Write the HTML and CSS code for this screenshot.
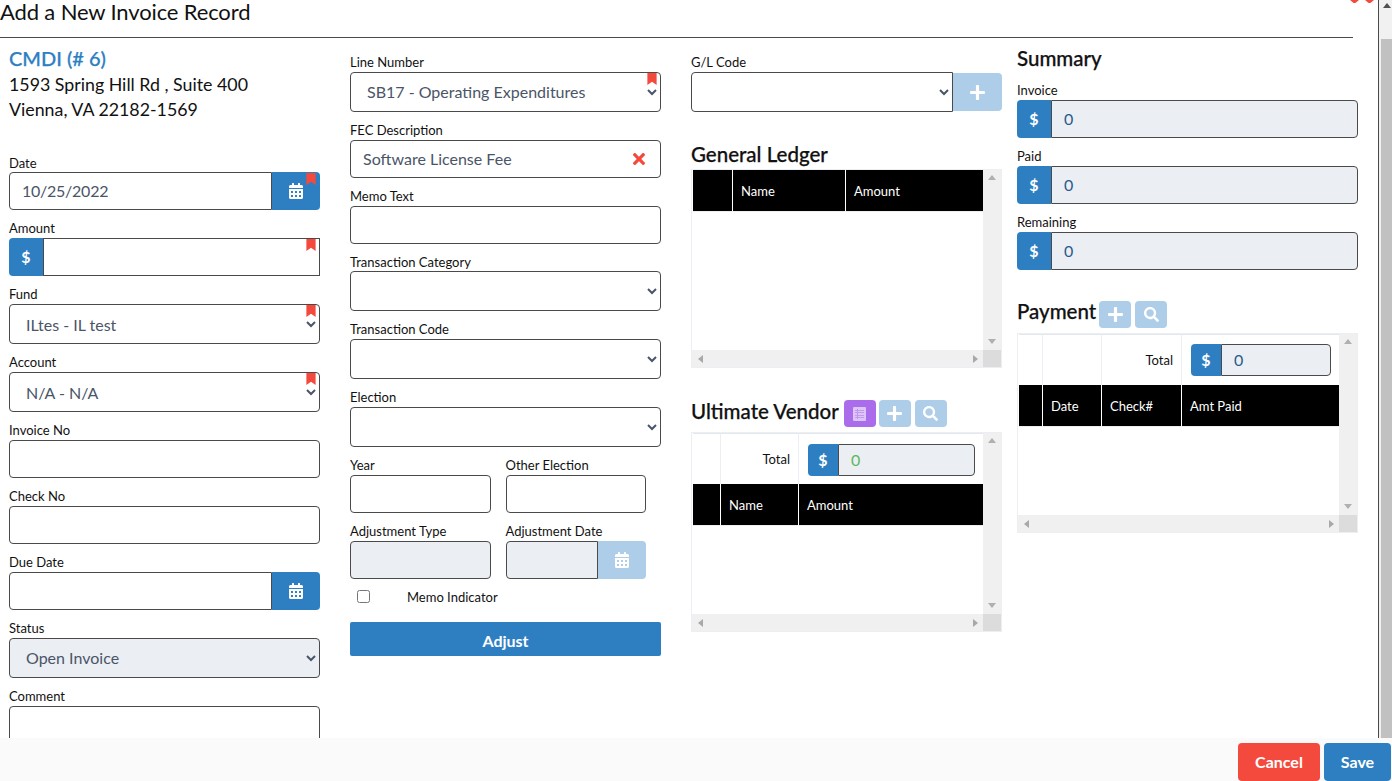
FILE: index.html
```html
<!DOCTYPE html>
<html lang="en">
<head>
<meta charset="utf-8">
<title>Add a New Invoice Record</title>
<link rel="stylesheet" href="styles.css">
</head>
<body>
<svg class="defs" width="0" height="0" aria-hidden="true">
  <symbol id="i-cal" viewBox="0 0 448 512"><path d="M0 464c0 26.5 21.5 48 48 48h352c26.5 0 48-21.5 48-48V192H0v272zm320-196c0-6.6 5.4-12 12-12h40c6.6 0 12 5.4 12 12v40c0 6.6-5.4 12-12 12h-40c-6.6 0-12-5.4-12-12v-40zm0 128c0-6.6 5.4-12 12-12h40c6.6 0 12 5.4 12 12v40c0 6.6-5.4 12-12 12h-40c-6.6 0-12-5.4-12-12v-40zM192 268c0-6.6 5.4-12 12-12h40c6.6 0 12 5.4 12 12v40c0 6.6-5.4 12-12 12h-40c-6.6 0-12-5.4-12-12v-40zm0 128c0-6.6 5.4-12 12-12h40c6.6 0 12 5.4 12 12v40c0 6.6-5.4 12-12 12h-40c-6.6 0-12-5.4-12-12v-40zM64 268c0-6.6 5.4-12 12-12h40c6.6 0 12 5.4 12 12v40c0 6.6-5.4 12-12 12H76c-6.6 0-12-5.4-12-12v-40zm0 128c0-6.6 5.4-12 12-12h40c6.6 0 12 5.4 12 12v40c0 6.6-5.4 12-12 12H76c-6.6 0-12-5.4-12-12v-40zM400 64h-48V16c0-8.8-7.2-16-16-16h-32c-8.8 0-16 7.2-16 16v48H160V16c0-8.8-7.2-16-16-16h-32c-8.8 0-16 7.2-16 16v48H48C21.5 64 0 85.5 0 112v48h448v-48c0-26.5-21.5-48-48-48z"/></symbol>
  <symbol id="i-plus" viewBox="0 0 448 512"><path d="M416 208H272V64c0-17.67-14.33-32-32-32h-32c-17.67 0-32 14.33-32 32v144H32c-17.67 0-32 14.33-32 32v32c0 17.67 14.33 32 32 32h144v144c0 17.67 14.33 32 32 32h32c17.67 0 32-14.33 32-32V304h144c17.67 0 32-14.33 32-32v-32c0-17.67-14.33-32-32-32z"/></symbol>
  <symbol id="i-search" viewBox="0 0 512 512"><path d="M505 442.7L405.3 343c-4.5-4.5-10.6-7-17-7H372c27.6-35.3 44-79.7 44-128C416 93.1 322.9 0 208 0S0 93.1 0 208s93.1 208 208 208c48.3 0 92.7-16.4 128-44v16.3c0 6.4 2.5 12.5 7 17l99.7 99.7c9.4 9.4 24.6 9.4 33.9 0l28.3-28.3c9.4-9.4 9.4-24.6.1-34zM208 336c-70.7 0-128-57.2-128-128 0-70.7 57.2-128 128-128 70.7 0 128 57.2 128 128 0 70.7-57.2 128-128 128z"/></symbol>
  <symbol id="i-times" viewBox="0 0 352 512"><path d="M242.72 256l100.07-100.07c12.28-12.28 12.28-32.19 0-44.48l-22.24-22.24c-12.28-12.28-32.19-12.28-44.48 0L176 189.28 75.93 89.21c-12.28-12.28-32.19-12.28-44.48 0L9.21 111.45c-12.28 12.28-12.28 32.19 0 44.48L109.28 256 9.21 356.07c-12.28 12.28-12.28 32.19 0 44.48l22.24 22.24c12.28 12.28 32.2 12.28 44.48 0L176 322.72l100.07 100.07c12.28 12.28 32.2 12.28 44.48 0l22.24-22.24c12.28-12.28 12.28-32.19 0-44.48L242.72 256z"/></symbol>
  <symbol id="i-list" viewBox="0 0 13 14"><path fill-rule="evenodd" d="M1 0h11a1 1 0 0 1 1 1v12a1 1 0 0 1-1 1H1a1 1 0 0 1-1-1V1a1 1 0 0 1 1-1zm1 3v.6h9V3zm0 2.5v.6h9v-.6zM2 8v.6h9V8zm0 2.5v.6h9v-.6zM4 2v10h.6V2z"/></symbol>
  <symbol id="i-mark" viewBox="0 0 10 13"><path d="M0 0h10v13L5 9.5 0 13z"/></symbol>
</svg>

<div class="window">
  <div class="page">
    <main class="content">
      <h1 class="title">Add a New Invoice Record</h1>
      <div class="columns">

        <section class="col col-a">
          <div class="org">CMDI (# 6)</div>
          <div class="addr">1593 Spring Hill Rd , Suite 400</div>
          <div class="addr">Vienna, VA 22182-1569</div>
          <div class="spacer"></div>

          <div class="field">
            <label class="low">Date</label>
            <div class="group marked">
              <input class="ctl joined-r date" type="text" value="10/25/2022">
              <span class="addon wide"><svg class="ico"><use href="#i-cal"/></svg></span>
              <svg class="mark"><use href="#i-mark"/></svg>
            </div>
          </div>
          <div class="field">
            <label>Amount</label>
            <div class="group marked">
              <span class="addon dollar">$</span>
              <input class="ctl joined-l square" type="text">
              <svg class="mark"><use href="#i-mark"/></svg>
            </div>
          </div>
          <div class="field">
            <label>Fund</label>
            <div class="group marked">
              <select class="ctl sel sel-low"><option>ILtes - IL test</option></select>
              <svg class="mark"><use href="#i-mark"/></svg>
            </div>
          </div>
          <div class="field">
            <label>Account</label>
            <div class="group marked">
              <select class="ctl sel sel-low"><option>N/A - N/A</option></select>
              <svg class="mark"><use href="#i-mark"/></svg>
            </div>
          </div>
          <div class="field"><label>Invoice No</label><input class="ctl" type="text"></div>
          <div class="field"><label>Check No</label><input class="ctl" type="text"></div>
          <div class="field">
            <label>Due Date</label>
            <div class="group">
              <input class="ctl joined-r" type="text">
              <span class="addon wide"><svg class="ico"><use href="#i-cal"/></svg></span>
            </div>
          </div>
          <div class="field">
            <label>Status</label>
            <select class="ctl sel off"><option>Open Invoice</option></select>
          </div>
          <div class="field">
            <label>Comment</label>
            <textarea class="ctl area"></textarea>
          </div>
        </section>

        <section class="col col-b">
          <div class="field">
            <label>Line Number</label>
            <div class="group marked">
              <select class="ctl sel"><option>SB17 - Operating Expenditures</option></select>
              <svg class="mark"><use href="#i-mark"/></svg>
            </div>
          </div>
          <div class="field">
            <label>FEC Description</label>
            <div class="group">
              <input class="ctl" type="text" value="Software License Fee">
              <svg class="clear"><use href="#i-times"/></svg>
            </div>
          </div>
          <div class="field"><label>Memo Text</label><input class="ctl" type="text"></div>
          <div class="field"><label class="low">Transaction Category</label><select class="ctl sel"><option></option></select></div>
          <div class="field"><label>Transaction Code</label><select class="ctl sel"><option></option></select></div>
          <div class="field"><label>Election</label><select class="ctl sel"><option></option></select></div>
          <div class="pair">
            <div class="field"><label>Year</label><input class="ctl" type="text"></div>
            <div class="field"><label>Other Election</label><input class="ctl" type="text"></div>
          </div>
          <div class="pair">
            <div class="field"><label>Adjustment Type</label><input class="ctl off" type="text"></div>
            <div class="field">
              <label>Adjustment Date</label>
              <div class="group">
                <input class="ctl off joined-r" type="text">
                <span class="addon wide pale"><svg class="ico"><use href="#i-cal"/></svg></span>
              </div>
            </div>
          </div>
          <div class="memo">
            <input class="check" type="checkbox">
            <span class="memo-text">Memo Indicator</span>
          </div>
          <button class="adjust" type="button">Adjust</button>
        </section>

        <section class="col col-c">
          <div class="field">
            <label>G/L Code</label>
            <div class="group">
              <select class="ctl sel joined-r"><option></option></select>
              <span class="addon plus-addon pale"><svg class="ico-p"><use href="#i-plus"/></svg></span>
            </div>
          </div>

          <h2 class="head head-gl">General Ledger</h2>
          <div class="box box-gl">
            <div class="box-main">
              <div class="view">
                <table class="grid t-gl">
                  <thead><tr><th class="w39"></th><th class="w113">Name</th><th>Amount</th></tr></thead>
                </table>
              </div>
              <div class="vbar"><i class="tri up"></i><i class="tri down"></i></div>
            </div>
            <div class="hbar"><i class="tri left"></i><i class="tri right"></i><b class="corner"></b></div>
          </div>

          <div class="head-row head-uv">
            <h2 class="head">Ultimate Vendor</h2>
            <button class="tool purple" type="button"><svg class="ico-t"><use href="#i-list"/></svg></button>
            <button class="tool" type="button"><svg class="ico-p"><use href="#i-plus"/></svg></button>
            <button class="tool" type="button"><svg class="ico-t"><use href="#i-search"/></svg></button>
          </div>
          <div class="box">
            <div class="box-main">
              <div class="view">
                <table class="grid">
                  <tbody>
                    <tr>
                      <td class="w28"></td>
                      <td class="w78 total">Total</td>
                      <td class="sum sum-low">
                        <div class="group mini">
                          <span class="addon dollar">$</span>
                          <input class="ctl off joined-l green" type="text" value="0">
                        </div>
                      </td>
                    </tr>
                    <tr class="dark"><th></th><th>Name</th><th>Amount</th></tr>
                  </tbody>
                </table>
              </div>
              <div class="vbar"><i class="tri up"></i><i class="tri down"></i></div>
            </div>
            <div class="hbar"><i class="tri left"></i><i class="tri right"></i><b class="corner"></b></div>
          </div>
        </section>

        <section class="col col-d">
          <h2 class="head head-sum">Summary</h2>
          <div class="field">
            <label>Invoice</label>
            <div class="group"><span class="addon dollar">$</span><input class="ctl off joined-l blue" type="text" value="0"></div>
          </div>
          <div class="field">
            <label>Paid</label>
            <div class="group"><span class="addon dollar">$</span><input class="ctl off joined-l blue" type="text" value="0"></div>
          </div>
          <div class="field">
            <label>Remaining</label>
            <div class="group"><span class="addon dollar">$</span><input class="ctl off joined-l blue" type="text" value="0"></div>
          </div>

          <div class="head-row head-pay">
            <h2 class="head">Payment</h2>
            <button class="tool" type="button"><svg class="ico-p"><use href="#i-plus"/></svg></button>
            <button class="tool" type="button"><svg class="ico-t"><use href="#i-search"/></svg></button>
          </div>
          <div class="box">
            <div class="box-main">
              <div class="view">
                <table class="grid">
                  <tbody>
                    <tr>
                      <td class="w24"></td>
                      <td class="w59"></td>
                      <td class="w80 total">Total</td>
                      <td class="sum">
                        <div class="group mini">
                          <span class="addon dollar">$</span>
                          <input class="ctl off joined-l blue" type="text" value="0">
                        </div>
                      </td>
                    </tr>
                    <tr class="dark"><th></th><th>Date</th><th>Check#</th><th>Amt Paid</th></tr>
                  </tbody>
                </table>
              </div>
              <div class="vbar"><i class="tri up"></i><i class="tri down"></i></div>
            </div>
            <div class="hbar"><i class="tri left"></i><i class="tri right"></i><b class="corner"></b></div>
          </div>
        </section>

      </div>
      <svg class="close-x" viewBox="0 0 30 4" aria-hidden="true"><path d="M2 0h9L8 2.4Q6.500 3.600 5 2.400zM17 0h9L23 2.400Q21.500 3.600 20 2.400z"/></svg>
    </main>
    <div class="pagebar"><i class="tri up dark-tri"></i><div class="thumb"></div></div>
  </div>
  <footer class="foot">
    <button class="btn cancel" type="button">Cancel</button>
    <button class="btn save" type="button">Save</button>
  </footer>
</div>
</body>
</html>
```

FILE: styles.css
```css
* { box-sizing: border-box; }
html, body { margin: 0; padding: 0; }
body { font-family: Lato, "Open Sans", Arial, sans-serif; color: #111; background: #fff; overflow: hidden; }
.defs { position: absolute; }

.window { width: 1392px; height: 781px; display: flex; flex-direction: column; overflow: hidden; }
.page { height: 738px; display: flex; overflow: hidden; }
.content { position: relative; width: 1378px; height: 738px; overflow: hidden; flex: none; }

.title { width: 1353px; height: 38px; margin: 0; font-size: 22px; font-weight: 400; letter-spacing: -0.14px; line-height: 23px; color: #111; border-bottom: 1px solid #4a4a4a; }

.close-x { position: absolute; left: 1348px; top: 0; width: 30px; height: 4px; fill: #f44a3e; }

.columns { display: flex; padding-left: 9px; align-items: flex-start; }
.col { width: 311px; margin-right: 30px; flex: none; }
.col-a { padding-top: 6px; }
.col-b { padding-top: 15px; }
.col-c { padding-top: 15px; margin-right: 15px; }
.col-d { width: 341px; margin-right: 0; padding-top: 8px; }

.org { font-size: 20px; line-height: 28px; font-weight: 500; color: #2e7fc2; -webkit-text-stroke: 0.25px #2e7fc2; }
.addr { font-size: 17.8px; line-height: 25px; color: #111; }
.spacer { height: 32px; }

.field { margin-bottom: 9px; }
label { display: block; height: 18px; margin-bottom: 1px; font-size: 13px; line-height: 18px; color: #111; }
label.low { margin-bottom: 0; }

.ctl { display: block; width: 100%; height: 38px; padding: 0 12px 2px; border: 1px solid #4a4a4a; border-radius: 4px; background: #fff; font-family: inherit; font-size: 16px; color: #4a5568; outline: none; }
.sel { height: 40px; }
.sel-low { padding-bottom: 0; }
.date { letter-spacing: -0.25px; }
.off { background: #ebeef3; }
.area { height: 60px; resize: none; }
.blue { color: #2c5a8c; }
.green { color: #5cb85c; }

.group { position: relative; display: flex; width: 100%; }
.group .ctl { flex: 1; min-width: 0; }
.joined-r { border-top-right-radius: 0; border-bottom-right-radius: 0; }
.joined-l { border-top-left-radius: 0; border-bottom-left-radius: 0; }
.square { border-radius: 0; }

.addon { flex: none; display: flex; align-items: center; justify-content: center; background: #2e7fc2; color: #fff; }
.addon.wide { width: 48px; border-radius: 0 4px 4px 0; }
.addon.dollar { width: 34px; padding-bottom: 1px; border-radius: 4px 0 0 4px; font-size: 16px; font-weight: 700; }
.addon.pale { background: #aecde8; }
.addon.plus-addon { width: 49px; height: 38px; margin-top: 1px; border-radius: 0 4px 4px 0; }
.ico { width: 14px; height: 16px; fill: #fff; }
.ico-p { width: 17px; height: 17px; fill: #fff; }

.mark { position: absolute; right: 4px; top: 1px; width: 10px; height: 12px; fill: #f44a3e; }
.clear { position: absolute; right: 16px; top: 10px; width: 12px; height: 18px; fill: #f44a3e; }

.pair { display: flex; gap: 15px; width: 296px; }
.pair .field { flex: 1; min-width: 0; }

.memo { display: flex; align-items: center; height: 16px; margin-bottom: 18px; font-size: 13px; color: #111; }
.memo-text { padding-top: 2px; }
.check { width: 13px; height: 13px; margin: 0 37px 0 7px; }

.adjust { display: block; width: 100%; height: 34px; padding: 2px 0 0; border: 0; border-radius: 2px; background: #2e7fc2; color: #fff; font-family: inherit; font-size: 16px; font-weight: 700; }

.head { margin: 0; font-size: 20.5px; font-weight: 500; line-height: 24px; color: #111; -webkit-text-stroke: 0.25px #111; }
.head-gl { margin: 30px 0 3px; }
.head-sum { margin-bottom: 11px; }
.head-row { display: flex; align-items: center; height: 27px; margin-bottom: 5px; }
.head-uv { margin-top: 32px; }
.head-pay { margin-top: 31px; }
.head-row .head { margin-right: 5px; padding-bottom: 7px; height: 31px; }
.head-uv .head { padding-bottom: 5px; height: 29px; }
.head-pay .head { margin-right: 3px; }

.tool { display: flex; align-items: center; justify-content: center; width: 32px; height: 27px; margin-right: 4px; padding: 0; border: 0; border-radius: 4px; background: #aecde8; }
.tool.purple { margin-right: 3px; background: #ab6cec; }
.ico-t { width: 15px; height: 15px; fill: #fff; }
.purple .ico-t { fill: #dcc6f8; width: 13px; height: 14px; }

.box { display: flex; flex-direction: column; height: 200px; border: 1px solid #ebeef2; background: #f0f0f0; }
.box-gl { height: 199px; }
.box-main { display: flex; flex: 1; min-height: 0; }
.view { flex: 1; min-width: 0; background: #fff; overflow: hidden; padding-left: 1px; }
.vbar { display: flex; flex-direction: column; justify-content: space-between; align-items: center; width: 18px; padding: 5px 0 6px; background: #f0f0f0; flex: none; }
.hbar { display: flex; justify-content: space-between; align-items: center; position: relative; height: 17px; padding: 0 23px 0 6px; background: #f0f0f0; flex: none; }
.corner { position: absolute; right: 0; top: 0; width: 18px; height: 17px; background: #dcdcdc; }

.tri { display: block; width: 0; height: 0; border: 4px solid transparent; }
.tri.up { border-top: 0; border-bottom: 5px solid #b0b0b0; }
.tri.down { border-bottom: 0; border-top: 5px solid #b0b0b0; }
.tri.left { border-left: 0; border-right: 5px solid #a8a8a8; }
.tri.right { border-right: 0; border-left: 5px solid #a8a8a8; }

.grid { width: 100%; border-collapse: separate; border-spacing: 0; table-layout: fixed; font-size: 13px; }
.grid th { height: 42px; padding: 0 8px; background: #000; color: #fff; font-weight: 400; text-align: left; border-left: 1px solid #fff; border-bottom: 1px solid #eee; }
.grid th:first-child { border-left: 0; }
.grid td { height: 51px; padding: 0; border-left: 1px solid #ebeef2; border-top: 1px solid #e4e8ec; }
.grid td:first-child { border-left: 0; }
.w39 { width: 39px; }
.w113 { width: 113px; }
.w28 { width: 27px; }
.w78 { width: 78px; }
.w24 { width: 23px; }
.w59 { width: 59px; }
.w80 { width: 80px; }
.total { text-align: right; padding-right: 8px !important; color: #111; }
.sum { padding: 0 8px 0 9px !important; }
.sum-low { padding-top: 2px !important; }
.mini .ctl { height: 32px; }
.mini .addon.dollar { width: 30px; }

.pagebar { position: relative; width: 14px; height: 738px; border-left: 1px solid #4a4a4a; background: #f1f1f1; flex: none; }
.dark-tri { position: absolute; left: 4px; top: 3px; }
.tri.dark-tri { border-bottom-color: #505050; }
.thumb { position: absolute; left: 2px; right: 0; top: 39px; bottom: 0; background: #c1c1c1; }

.foot { display: flex; justify-content: flex-end; align-items: flex-end; gap: 4px; height: 43px; padding-right: 1px; background: #fafafa; }
.btn { height: 38px; padding: 0 0 2px; border: 0; border-radius: 4px; color: #fff; font-family: inherit; font-size: 16px; font-weight: 700; }
.cancel { width: 82px; background: #f44a3e; }
.save { width: 67px; background: #2e7fc2; }
```
